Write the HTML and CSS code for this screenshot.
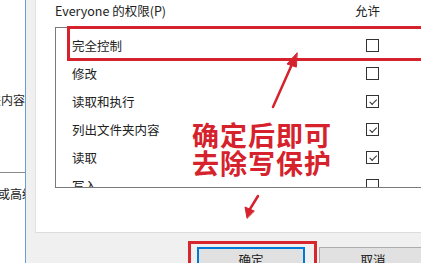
FILE: index.html
```html
<!DOCTYPE html>
<html lang="zh-CN">
<head>
    <meta charset="UTF-8">
    <title>权限</title>
    <link rel="stylesheet" href="styles.css">
</head>
<body>

<div class="window">
    <div class="side">
        <div class="side-top"><span class="side-text">夹内容</span></div>
        <div class="side-bottom"><span class="side-text cut">或高级</span></div>
    </div>

    <div class="dialog">
        <div class="panel">
            <div class="perm-head">
                <span class="perm-title">Everyone 的权限(P)</span>
                <span class="perm-allow">允许</span>
            </div>
            <div class="perm-list">
                <div class="perm-row"><span>完全控制</span><i class="check"></i></div>
                <div class="perm-row"><span>修改</span><i class="check"></i></div>
                <div class="perm-row"><span>读取和执行</span><i class="check on"></i></div>
                <div class="perm-row"><span>列出文件夹内容</span><i class="check on"></i></div>
                <div class="perm-row"><span>读取</span><i class="check on"></i></div>
                <div class="perm-row"><span>写入</span><i class="check"></i></div>
            </div>
        </div>
        <div class="buttons">
            <div class="btn-frame"><button class="btn primary">确定</button></div>
            <button class="btn">取消</button>
        </div>
    </div>

    <!-- annotations -->
    <div class="mark-row"></div>
    <div class="note">确定后即可<br>去除写保护</div>
    <svg class="arrows" width="421" height="263" viewBox="0 0 421 263">
        <g stroke="#d6222c" stroke-width="2.5" fill="#d6222c" stroke-linecap="round">
            <line x1="273" y1="107" x2="293" y2="62"/>
            <polygon points="297,53 287,64 296,67" stroke-width="1"/>
            <line x1="258" y1="196" x2="250" y2="209"/>
            <polygon points="247,218 245,207 254,211" stroke-width="1"/>
        </g>
    </svg>
</div>

</body>
</html>
```

FILE: styles.css
```css
body {
    margin: 0;
    padding: 0;
    font-family: "Noto Sans CJK SC", "Noto Sans", sans-serif;
    font-size: 12px;
    color: #222;
    background: #fff;
}

.window {
    position: relative;
    display: flex;
    width: 421px;
    height: 263px;
    overflow: hidden;
}

/* left window behind the dialog */
.side {
    width: 25px;
    flex: none;
    background: #fff;
    border-right: 1px solid #6a9fcf;
    display: flex;
    flex-direction: column;
    overflow: hidden;
}

.side-top {
    height: 173px;
    border-bottom: 1px solid #8a8a8a;
    display: flex;
    justify-content: flex-end;
    padding-top: 91px;
    box-sizing: border-box;
}

.side-bottom {
    padding-top: 12px;
}

.side-text {
    white-space: nowrap;
    display: block;
}

.side-top .side-text {
    margin-left: -20px;
}

.side-text.cut {
    margin-left: -2px;
}

/* dialog */
.dialog {
    flex: 1;
    background: #f0f0f0;
    padding-left: 9px;
    display: flex;
    flex-direction: column;
}

.panel {
    height: 233px;
    width: 420px;
    flex: none;
    box-sizing: border-box;
    background: #fff;
    border-left: 1px solid #e2e2e2;
    border-bottom: 1px solid #dcdcdc;
    padding-left: 19px;
}

.perm-head {
    height: 27px;
    display: flex;
    align-items: flex-start;
    padding-top: 1px;
    box-sizing: border-box;
}

.perm-title {
    width: 300px;
    font-size: 12.5px;
}

.perm-allow {
    font-size: 12.5px;
}

.perm-list {
    height: 161px;
    box-sizing: border-box;
    border: 1px solid #7a7a7a;
    border-right: none;
    padding: 3px 0 0 16px;
    overflow: hidden;
}

.perm-row {
    height: 28px;
    display: grid;
    grid-template-columns: 294px 13px;
    align-items: center;
    font-size: 12.5px;
}

.check {
    width: 13px;
    height: 13px;
    box-sizing: border-box;
    border: 1px solid #333;
    position: relative;
}

.check.on::after {
    content: "";
    position: absolute;
    left: 2px;
    top: 1px;
    width: 6px;
    height: 3px;
    border-left: 1.5px solid #333;
    border-bottom: 1.5px solid #333;
    transform: rotate(-45deg) translate(-1px, 2px);
}

/* buttons */
.buttons {
    flex: 1;
    display: flex;
    align-items: flex-start;
    padding: 8px 0 0 153px;
}

.btn-frame {
    border: 3px solid #d8262f;
    padding: 3px 9px 0 6px;
}

.btn {
    width: 108px;
    height: 24px;
    font-family: inherit;
    font-size: 12.5px;
    color: #222;
    background: #e1e1e1;
    border: 1px solid #adadad;
    padding: 0;
    margin-top: 6px;
    margin-left: 2px;
}

.btn.primary {
    border: 2px solid #0078d7;
    margin: 0;
}

/* annotations */
.mark-row {
    position: absolute;
    left: 67px;
    top: 26px;
    width: 380px;
    height: 29px;
    border: 3px solid #d6222c;
}

.note {
    position: absolute;
    left: 192px;
    top: 121px;
    font-size: 27px;
    font-weight: bold;
    line-height: 28px;
    letter-spacing: 1px;
    color: #d6222c;
}

.arrows {
    position: absolute;
    left: 0;
    top: 0;
}
```
